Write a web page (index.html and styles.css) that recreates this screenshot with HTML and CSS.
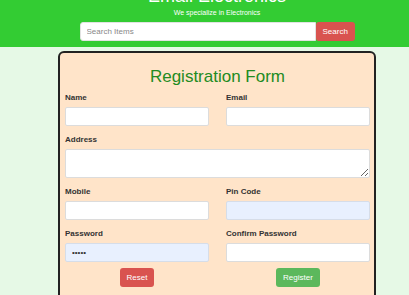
FILE: index.html
```html
<!DOCTYPE html>
<html lang="en">
<head>
<meta charset="utf-8">
<title>Registration</title>
<link rel="stylesheet" href="styles.css">
</head>
<body>
<header class="site-header">
  <h1 class="brand">Email Electronics</h1>
  <p class="tagline">We specialize in Electronics</p>
  <form class="search">
    <input class="search-input" type="text" placeholder="Search Items">
    <button class="btn btn-red search-btn" type="button">Search</button>
  </form>
</header>
<main class="page">
  <form class="card">
    <h2 class="card-title">Registration Form</h2>
    <div class="grid">
      <div class="field">
        <label class="label">Name</label>
        <input class="input" type="text">
      </div>
      <div class="field">
        <label class="label">Email</label>
        <input class="input" type="email">
      </div>
      <div class="field span-2">
        <label class="label">Address</label>
        <textarea class="input textarea"></textarea>
      </div>
      <div class="field">
        <label class="label">Mobile</label>
        <input class="input" type="text">
      </div>
      <div class="field">
        <label class="label">Pin Code</label>
        <input class="input filled" type="text">
      </div>
      <div class="field">
        <label class="label">Password</label>
        <input class="input filled" type="password" value="aaaaa">
      </div>
      <div class="field">
        <label class="label">Confirm Password</label>
        <input class="input" type="password">
      </div>
      <div class="actions"><button class="btn btn-red" type="reset">Reset</button></div>
      <div class="actions"><button class="btn btn-green" type="button">Register</button></div>
    </div>
  </form>
</main>
</body>
</html>
```

FILE: styles.css
```css
* { box-sizing: border-box; }
html, body { margin: 0; padding: 0; }
body {
  font-family: "Liberation Sans", Arial, sans-serif;
  background: #e6f9e6;
  padding-left: 25px;
  height: 295px;
  overflow: hidden;
}
.site-header {
  background: #33cc33;
  margin-left: -25px;
  padding: 0 0 6px 25px;
  text-align: center;
}
.brand {
  margin: -13px 0 0;
  font-size: 18px;
  line-height: 18px;
  font-weight: normal;
  color: #fff;
}
.tagline {
  margin: 3px 0 0;
  font-size: 7px;
  line-height: 10px;
  color: #fff;
}
.search {
  display: flex;
  justify-content: center;
  margin-top: 4px;
}
.search-input {
  width: 236px;
  height: 19px;
  border: 1px solid #e2e2e2;
  border-radius: 3px 0 0 3px;
  padding: 0 6px;
  font: 8px "Liberation Sans", Arial, sans-serif;
  background: #fff;
  outline: none;
}
.search-input::placeholder { color: #888; }
.search-btn {
  border-radius: 0 3px 3px 0;
  height: 19px;
  width: 39px;
  padding: 0;
}
.page {
  padding-top: 4px;
  display: flex;
  justify-content: center;
}
.card {
  width: 318px;
  background: #ffe4c9;
  border: 2px solid #222;
  border-radius: 6px;
  padding: 14px 4px 12px 5px;
}
.card-title {
  margin: 0 0 6px;
  text-align: center;
  font-size: 17px;
  line-height: 20px;
  font-weight: normal;
  color: #228b22;
}
.grid {
  display: grid;
  grid-template-columns: 144px 144px;
  column-gap: 17px;
  row-gap: 9px;
}
.span-2 { grid-column: 1 / 3; }
.label {
  display: block;
  font-size: 8px;
  line-height: 10px;
  font-weight: bold;
  color: #333;
  margin-bottom: 4px;
}
.input {
  display: block;
  width: 100%;
  height: 19px;
  border: 1px solid #dcdcdc;
  border-radius: 2px;
  background: #fff;
  padding: 0 6px;
  font: 8px "Liberation Sans", Arial, sans-serif;
  color: #333;
  outline: none;
}
.textarea {
  height: 29px;
  resize: vertical;
}
.filled { background: #e8f0fe; border-color: #d6dde8; }
.actions {
  display: flex;
  justify-content: center;
  margin-top: -3px;
}
.btn {
  height: 19px;
  padding: 0 7px;
  border: none;
  border-radius: 3px;
  color: #fff;
  font: 8px "Liberation Sans", Arial, sans-serif;
}
.btn-red { background: #d9534f; }
.btn-green { background: #5cb85c; }
```
